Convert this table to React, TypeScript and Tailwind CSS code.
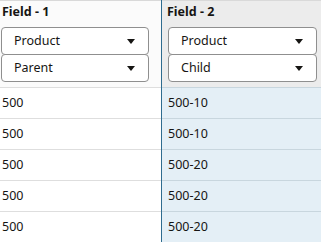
import React from 'react';

const rows = [
  { parent: '500', child: '500-10' },
  { parent: '500', child: '500-10' },
  { parent: '500', child: '500-20' },
  { parent: '500', child: '500-20' },
  { parent: '500', child: '500-20' },
];

const Select: React.FC<{ label: string; top?: boolean }> = ({ label, top }) => (
  <div
    className={`flex h-[28px] items-center justify-between rounded-[4px] border border-[#8f8f8f] bg-white pl-[12px] pr-[13px] ${
      top ? '' : '-mt-px'
    }`}
  >
    <span className="text-[12.5px] text-[#161513]">{label}</span>
    <svg width="8" height="5" viewBox="0 0 8 5">
      <path d="M0 0h8L4 5z" fill="#161513" />
    </svg>
  </div>
);

const App: React.FC = () => {
  return (
    <div
      className="h-[243px] w-[321px] overflow-hidden bg-white"
      style={{ fontFamily: '"Noto Sans", "Open Sans", sans-serif' }}
    >
      <div className="flex">
        {/* Field 1 */}
        <div className="w-[161px] shrink-0">
          <div className="h-[87px] border-t border-[#d9d9d9] bg-[#fbfbfb] pt-[2px]">
            <div className="pl-[2px] text-[12.5px] font-bold leading-[18px] text-[#161513]">Field - 1</div>
            <div className="mt-[6px] w-[149px] pl-[1px]">
              <Select label="Product" top />
              <Select label="Parent" />
            </div>
          </div>
          {rows.map((r, i) => (
            <div
              key={i}
              className="flex h-[31px] items-center border-t border-[#dedede] pl-[2px] text-[12.5px] text-[#161513]"
            >
              {r.parent}
            </div>
          ))}
        </div>

        {/* divider */}
        <div className="w-px shrink-0 bg-[#2f6c8f]" />

        {/* Field 2 */}
        <div className="flex-1">
          <div className="h-[87px] border-t border-[#d9d9d9] bg-[#ececec] pt-[2px]">
            <div className="pl-[5px] text-[12.5px] font-bold leading-[18px] text-[#161513]">Field - 2</div>
            <div className="mt-[6px] pl-[6px] pr-[4px]">
              <Select label="Product" top />
              <Select label="Child" />
            </div>
          </div>
          {rows.map((r, i) => (
            <div
              key={i}
              className="flex h-[31px] items-center border-t border-[#c8d6de] bg-[#e4eff6] pl-[6px] text-[12.5px] text-[#161513]"
            >
              {r.child}
            </div>
          ))}
        </div>
      </div>
    </div>
  );
};

export default App;
